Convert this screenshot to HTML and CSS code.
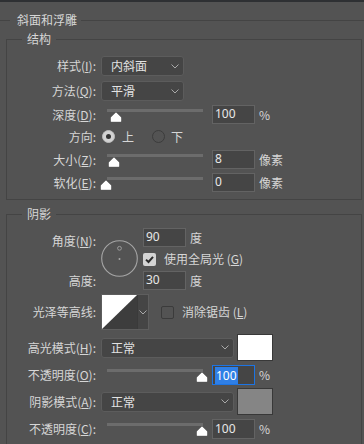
FILE: index.html
```html
<!DOCTYPE html>
<html lang="zh">
<head>
<meta charset="utf-8">
<link rel="stylesheet" href="styles.css">
</head>
<body>
<div class="panel">
  <div class="outer-title"><span>斜面和浮雕</span></div>

  <fieldset class="group group-structure">
    <legend>结构</legend>
    <div class="rows">
      <div class="row row-select row-first">
        <span class="lbl">样式(<u>I</u>):</span>
        <div class="select select-short"><span>内斜面</span><svg class="chev" width="8" height="5" viewBox="0 0 8 5"><polyline points="0.5,0.5 4,4 7.5,0.5" fill="none" stroke="#a9a9a9" stroke-width="1"/></svg></div>
      </div>
      <div class="row row-select">
        <span class="lbl">方法(<u>Q</u>):</span>
        <div class="select select-short"><span>平滑</span><svg class="chev" width="8" height="5" viewBox="0 0 8 5"><polyline points="0.5,0.5 4,4 7.5,0.5" fill="none" stroke="#a9a9a9" stroke-width="1"/></svg></div>
      </div>
      <div class="row row-slider">
        <span class="lbl">深度(<u>D</u>):</span>
        <div class="slider"><div class="track"></div><svg class="thumb" style="left:9px" width="12" height="10" viewBox="0 0 12 10"><path d="M6 1.2 L10.6 5.6 L10.6 9.2 L1.4 9.2 L1.4 5.6 Z" fill="#fff" stroke="#fff" stroke-width="1.2" stroke-linejoin="round"/></svg></div>
        <div class="num">100</div><span class="unit">%</span>
      </div>
      <div class="row row-radio">
        <span class="lbl">方向:</span>
        <span class="radio on"></span><span class="rtext">上</span>
        <span class="radio off"></span><span class="rtext">下</span>
      </div>
      <div class="row row-slider row-gap5">
        <span class="lbl">大小(<u>Z</u>):</span>
        <div class="slider"><div class="track"></div><svg class="thumb" style="left:7px" width="12" height="10" viewBox="0 0 12 10"><path d="M6 1.2 L10.6 5.6 L10.6 9.2 L1.4 9.2 L1.4 5.6 Z" fill="#fff" stroke="#fff" stroke-width="1.2" stroke-linejoin="round"/></svg></div>
        <div class="num">8</div><span class="unit">像素</span>
      </div>
      <div class="row row-slider">
        <span class="lbl">软化(<u>E</u>):</span>
        <div class="slider"><div class="track"></div><svg class="thumb" style="left:-1px" width="12" height="10" viewBox="0 0 12 10"><path d="M6 1.2 L10.6 5.6 L10.6 9.2 L1.4 9.2 L1.4 5.6 Z" fill="#fff" stroke="#fff" stroke-width="1.2" stroke-linejoin="round"/></svg></div>
        <div class="num">0</div><span class="unit">像素</span>
      </div>
    </div>
  </fieldset>

  <fieldset class="group group-shadow">
    <legend>阴影</legend>
    <div class="angle">
      <span class="lbl lbl-angle">角度(<u>N</u>):</span>
      <svg class="dial" width="37" height="37" viewBox="0 0 37 37">
        <circle cx="18.5" cy="18.5" r="17.8" fill="none" stroke="#a6a6a6" stroke-width="1.1"/>
        <circle cx="18.5" cy="8.3" r="1.9" fill="none" stroke="#9c9c9c" stroke-width="1"/>
        <circle cx="18.5" cy="19" r="1" fill="#a6a6a6"/>
      </svg>
      <div class="cell cell-1"><div class="num num-angle">90</div><span class="unit">度</span></div>
      <div class="cell cell-2"><span class="check on"><svg width="13" height="13" viewBox="0 0 13 13"><polyline points="3,6.6 5.5,9 10,3.8" fill="none" stroke="#2b2b2b" stroke-width="2"/></svg></span><span class="ctext">使用全局光 (<u>G</u>)</span></div>
      <span class="lbl lbl-height">高度:</span>
      <div class="cell cell-3"><div class="num num-angle">30</div><span class="unit">度</span></div>
    </div>

    <div class="row row-contour">
      <span class="lbl">光泽等高线:</span>
      <div class="contour">
        <svg class="contour-img" width="35" height="34" viewBox="0 0 35 34"><rect width="35" height="34" fill="#3d3d3d"/><polygon points="0,0 35,0 0,34" fill="#ffffff"/></svg>
        <div class="contour-drop"><svg class="chev" width="8" height="5" viewBox="0 0 8 5"><polyline points="0.5,0.5 4,4 7.5,0.5" fill="none" stroke="#a9a9a9" stroke-width="1"/></svg></div>
      </div>
      <span class="check off"></span><span class="ctext">消除锯齿 (<u>L</u>)</span>
    </div>

    <div class="row row-mode">
      <span class="lbl">高光模式(<u>H</u>):</span>
      <div class="select select-long"><span>正常</span><svg class="chev" width="8" height="5" viewBox="0 0 8 5"><polyline points="0.5,0.5 4,4 7.5,0.5" fill="none" stroke="#a9a9a9" stroke-width="1"/></svg></div>
      <div class="swatch swatch-white"></div>
    </div>

    <div class="row row-opacity">
      <span class="lbl">不透明度(<u>O</u>):</span>
      <div class="slider"><div class="track"></div><svg class="thumb" style="left:95px" width="12" height="10" viewBox="0 0 12 10"><path d="M6 1.2 L10.6 5.6 L10.6 9.2 L1.4 9.2 L1.4 5.6 Z" fill="#fff" stroke="#fff" stroke-width="1.2" stroke-linejoin="round"/></svg></div>
      <div class="num num-focus"><span class="sel">100</span></div><span class="unit">%</span>
    </div>

    <div class="row row-mode row-gap3">
      <span class="lbl">阴影模式(<u>A</u>):</span>
      <div class="select select-long"><span>正常</span><svg class="chev" width="8" height="5" viewBox="0 0 8 5"><polyline points="0.5,0.5 4,4 7.5,0.5" fill="none" stroke="#a9a9a9" stroke-width="1"/></svg></div>
      <div class="swatch swatch-gray"></div>
    </div>

    <div class="row row-opacity">
      <span class="lbl">不透明度(<u>C</u>):</span>
      <div class="slider"><div class="track"></div><svg class="thumb" style="left:95px" width="12" height="10" viewBox="0 0 12 10"><path d="M6 1.2 L10.6 5.6 L10.6 9.2 L1.4 9.2 L1.4 5.6 Z" fill="#fff" stroke="#fff" stroke-width="1.2" stroke-linejoin="round"/></svg></div>
      <div class="num">100</div><span class="unit">%</span>
    </div>
  </fieldset>
</div>
</body>
</html>
```

FILE: styles.css
```css
html, body {
  margin: 0;
  padding: 0;
  background: #535353;
}

body {
  width: 364px;
  height: 444px;
  overflow: hidden;
  font-family: "Noto Sans CJK SC", "Noto Sans", sans-serif;
  font-size: 12px;
  line-height: 14px;
  color: #d6d6d6;
}

u {
  text-decoration: underline;
  text-underline-offset: 1px;
}

.panel {
  border-top: 2px solid #2e3033;
}

/* outer section title */
.outer-title {
  display: flex;
  align-items: center;
  height: 14px;
  margin-top: 11px;
}
.outer-title::before,
.outer-title::after {
  content: "";
  height: 1px;
  background: #444444;
}
.outer-title::before {
  width: 10px;
}
.outer-title::after {
  flex: 1;
}
.outer-title span {
  margin: 0 4px 0 7px;
}

/* groups */
.group {
  margin: 0 2px 0 6px;
  padding: 0;
  border: 1px solid #444444;
  min-width: 0;
}
.group legend {
  margin-left: 15px;
  padding: 0 5px;
  line-height: 14px;
  height: 14px;
}
.group-structure {
  margin-top: 5px;
  padding: 10px 0 7px;
}
.group-shadow {
  margin-top: 7px;
  padding: 7px 0 20px;
}

.rows {
  display: flex;
  flex-direction: column;
  gap: 4px;
}

.row {
  display: flex;
  align-items: center;
}
.row-select { height: 20px; }
.row-first { margin-bottom: 1px; }
.row-slider { height: 19px; }
.row-radio { height: 17px; }
.row-gap5 { margin-top: 1px; }

.lbl {
  flex: none;
  width: 89px;
  margin-right: 5px;
  text-align: right;
  white-space: nowrap;
}

/* dropdown */
.select {
  box-sizing: border-box;
  height: 20px;
  display: flex;
  align-items: center;
  justify-content: space-between;
  padding: 0 4px 0 9px;
  background: #454545;
  border: 1px solid #5c5c5c;
  border-radius: 3px;
  color: #e2e2e2;
}
.select-short { width: 83px; }
.select-long { width: 133px; }
.chev { display: block; }

/* slider */
.slider {
  position: relative;
  flex: none;
  align-self: flex-start;
  width: 111px;
  height: 19px;
}
.track {
  margin: 4px 0 0 6px;
  width: 96px;
  height: 3px;
  background: #6c6c6c;
}
.thumb {
  position: absolute;
  top: 7px;
  display: block;
}

/* number input */
.num {
  flex: none;
  box-sizing: border-box;
  width: 43px;
  height: 19px;
  padding-left: 2px;
  background: #454545;
  border: 1px solid #636363;
  font-family: "Noto Sans", "Noto Sans CJK SC", sans-serif;
  font-size: 12px;
  line-height: 16px;
  color: #e8e8e8;
}
.num-focus {
  height: 20px;
  border-color: #1c74e4;
  padding-top: 1px;
}
.sel {
  background: #2f7fe6;
  color: #ffffff;
  padding: 0 1px;
}
.unit {
  margin-left: 4px;
  white-space: nowrap;
}

/* radio */
.radio {
  flex: none;
  box-sizing: border-box;
  width: 13px;
  height: 13px;
  border-radius: 50%;
}
.radio.on {
  margin-left: 1px;
  background: #d2d2d2;
  border: 1px solid #bdbdbd;
  display: flex;
  align-items: center;
  justify-content: center;
}
.radio.on::after {
  content: "";
  width: 5px;
  height: 5px;
  border-radius: 50%;
  background: #333333;
}
.radio.off {
  border: 1.5px solid #3c3c3c;
}
.rtext { margin: 0 18px 0 7px; }
.rtext:last-child { margin-right: 0; margin-left: 6px; }

/* angle block */
.angle {
  display: grid;
  grid-template-columns: 89px 37px auto;
  grid-template-rows: 19px 24px 19px;
  column-gap: 5px;
}
.lbl-angle {
  grid-column: 1;
  grid-row: 1;
  align-self: start;
  margin-top: 6px;
  width: auto;
  margin-right: 0;
}
.lbl-height {
  grid-column: 1;
  grid-row: 3;
  align-self: center;
  width: auto;
  margin-right: 0;
}
.dial {
  grid-column: 2;
  grid-row: 1 / 4;
  margin-top: 12px;
  display: block;
}
.cell {
  grid-column: 3;
  display: flex;
  align-items: center;
}
.cell-1 { grid-row: 1; }
.cell-2 { grid-row: 2; }
.cell-3 { grid-row: 3; }
.num-angle { width: 43px; }

/* checkbox */
.check {
  flex: none;
  box-sizing: border-box;
  width: 13px;
  height: 13px;
  border-radius: 2px;
}
.check svg { display: block; }
.check.on {
  background: #d4d4d4;
}
.check.off {
  border: 1px solid #3b3b3b;
  margin-left: 12px;
}
.ctext {
  margin-left: 8px;
  white-space: nowrap;
}

/* contour */
.row-contour {
  height: 36px;
  margin-top: 4px;
}
.contour {
  flex: none;
  box-sizing: border-box;
  width: 48px;
  height: 36px;
  display: flex;
  border: 1px solid #5e5e5e;
  background: #454545;
}
.contour-img { display: block; }
.contour-drop {
  flex: 1;
  display: flex;
  align-items: center;
  justify-content: center;
  border-left: 1px solid #3a3a3a;
}

/* modes */
.row-mode {
  height: 27px;
  margin-top: 4px;
}
.row-gap3 { margin-top: 3px; }
.swatch {
  flex: none;
  box-sizing: border-box;
  width: 36px;
  height: 27px;
  margin-left: 3px;
  border: 1px solid #383838;
}
.swatch-white { background: #ffffff; }
.swatch-gray { background: #858585; }

.row-opacity {
  height: 20px;
  margin-top: 4px;
}
.row-opacity .num { height: 20px; line-height: 17px; }
```
